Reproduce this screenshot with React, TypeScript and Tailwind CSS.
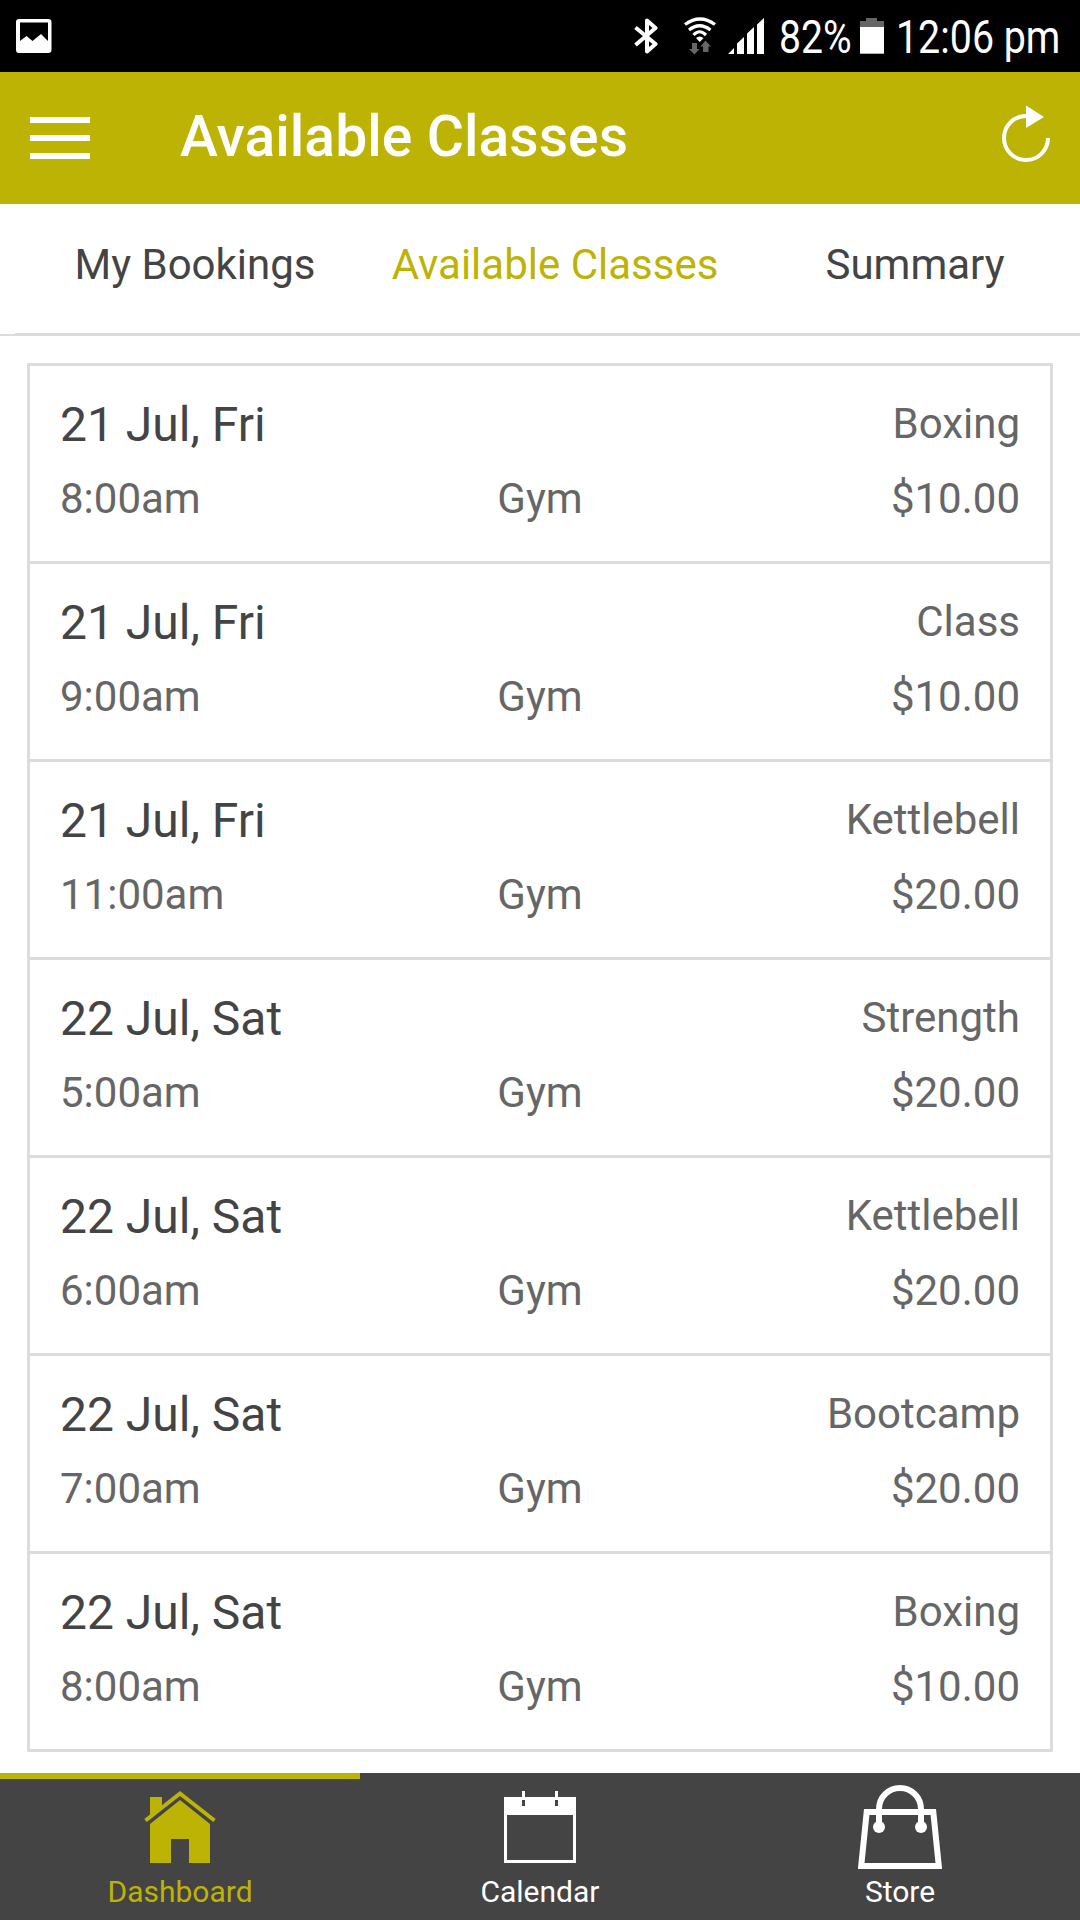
const classes = [
  { date: "21 Jul, Fri", time: "8:00am", name: "Boxing", price: "$10.00" },
  { date: "21 Jul, Fri", time: "9:00am", name: "Class", price: "$10.00" },
  { date: "21 Jul, Fri", time: "11:00am", name: "Kettlebell", price: "$20.00" },
  { date: "22 Jul, Sat", time: "5:00am", name: "Strength", price: "$20.00" },
  { date: "22 Jul, Sat", time: "6:00am", name: "Kettlebell", price: "$20.00" },
  { date: "22 Jul, Sat", time: "7:00am", name: "Bootcamp", price: "$20.00" },
  { date: "22 Jul, Sat", time: "8:00am", name: "Boxing", price: "$10.00" },
];

function StatusBar() {
  return (
    <div className="flex h-[72px] items-start overflow-hidden bg-black pt-[17px] pl-4 text-white">
      <svg className="mt-[2px] h-[34px] w-9 shrink-0" viewBox="0 0 36 34" fill="#fff">
        <path
          fillRule="evenodd"
          d="M3 0H32Q35.500 0 35.500 3V31Q35.500 34 32 34H3Q0 34 0 31V3Q0 0 3 0ZM4 3.500V22L10.500 17L16.500 22L25 15L32 22V3.500Z"
        />
      </svg>
      <svg className="ml-[582px] h-[38px] w-6 shrink-0" viewBox="0 0 24 38" fill="none" stroke="#fff" strokeWidth="4">
        <path d="M1.500 10.500L21.500 27L13 34.500V3.500L21.500 11L1.500 28" strokeLinejoin="round" />
      </svg>
      <svg className="ml-[26px] h-[38px] w-8 shrink-0" viewBox="0 0 32 38" fill="none">
        <g stroke="#fff" strokeWidth="3.200">
          <path d="M1 7.500Q16 -3.500 31 7.500" />
          <path d="M5 13Q15.500 4.500 26.500 13" />
          <path d="M9.500 18Q15.500 11.500 22 18" />
        </g>
        <path d="M12 21Q15.500 18 19.500 21L15.750 25Z" fill="#fff" />
        <path d="M8 26H13V32H15.500L10.500 37.500L5 32H8ZM19 35V29.500H16.500L21.500 23.500L27 29.500H24.500V35Z" fill="#666" />
      </svg>
      <svg className="mt-px ml-3 h-9 w-9 shrink-0" viewBox="0 0 36 36" fill="#fff">
        <path d="M0 36L6 30V36ZM9 36V25.500L16 19V36ZM19 36V15.500L26 9V36ZM29 36V6.500L36 0V36Z" />
      </svg>
      <div className="-mt-[17px] ml-[15px] w-[81px] shrink-0 leading-[75px]">
        <span className="inline-block origin-left scale-x-[0.86] text-[45.500px] whitespace-nowrap">82%</span>
      </div>
      <svg className="mt-px h-9 w-6 shrink-0" viewBox="0 0 24 36">
        <path d="M0 3H6V0H17V3H24V36H0Z" fill="#666" />
        <path d="M0 9H24V35.500H0Z" fill="#fff" />
      </svg>
      <div className="-mt-[17px] ml-3 shrink-0 leading-[75px]">
        <span className="inline-block origin-left scale-x-[0.865] text-[45.500px] whitespace-nowrap">12:06 pm</span>
      </div>
    </div>
  );
}

function Header() {
  return (
    <header className="flex h-[132px] items-start bg-[#bdb304] text-white">
      <button aria-label="Menu" className="mt-[45px] ml-[30px] flex w-[60px] flex-col gap-3">
        <span className="h-[6px] bg-white" />
        <span className="h-[6px] bg-white" />
        <span className="h-[6px] bg-white" />
      </button>
      <h1 className="ml-[90px] flex-1 text-[57px] leading-[129px] font-medium tracking-[0.06px] whitespace-nowrap">Available Classes</h1>
      <svg className="mt-[33px] mr-[30px] h-[58px] w-12" viewBox="0 0 48 58" fill="none">
        <path d="M24 11A22 22 0 1 0 46 33" stroke="#fff" strokeWidth="4" />
        <path d="M24 0.500L42 12L24 23Z" fill="#fff" />
      </svg>
    </header>
  );
}

function Tabs() {
  return (
    <nav className="flex h-[132px] items-end overflow-hidden">
      <div className="h-[2px] w-[15px] shrink-0 bg-[#dcdcdc]" />
      <div className="flex h-full shrink-0 border-b-[3px] border-[#dcdcdc] text-center text-[42px] leading-[121px] text-[#444]">
        <span className="w-[360px]">My Bookings</span>
        <span className="w-[360px] text-[#bdb304]">Available Classes</span>
        <span className="w-[360px]">Summary</span>
      </div>
    </nav>
  );
}

function HomeIcon() {
  return (
    <svg className="h-[84px] w-[84px]" viewBox="0 0 84 84" fill="#bdb304">
      <path d="M12 12H24V22L12 32Z" />
      <path d="M7.500 35.500L42 8.500L76.500 35.500" fill="none" stroke="#bdb304" strokeWidth="4" />
      <path d="M42 15L72 39V78H51V54H33V78H12V39Z" />
    </svg>
  );
}

function CalendarIcon() {
  return (
    <svg className="h-[84px] w-[84px]" viewBox="0 0 84 84" fill="#fff">
      <path d="M24 6H27V12H24ZM57 6H60V12H57Z" />
      <path fillRule="evenodd" d="M6 12H78V78H6ZM9 30V75H75V30ZM24 15V21H27V15ZM57 15V21H60V15Z" />
    </svg>
  );
}

function StoreIcon() {
  return (
    <svg className="h-[84px] w-[84px]" viewBox="0 0 84 84" fill="none" stroke="#fff" strokeWidth="6">
      <path d="M8.700 27H75.300L80.800 81H3.200Z" />
      <path d="M21 42V24A21 21 0 0 1 63 24V42" />
      <circle cx="21" cy="42" r="6" fill="#fff" stroke="none" />
      <circle cx="63" cy="42" r="6" fill="#fff" stroke="none" />
    </svg>
  );
}

function BottomNav() {
  return (
    <nav className="mt-[21px] grid h-[147px] grid-cols-3 bg-[#444] text-[30px] leading-[36px] text-white">
      <div className="flex flex-col items-center border-t-[6px] border-[#bdb304] pt-[6px] text-[#bdb304]">
        <HomeIcon />
        <span className="mt-[5px]">Dashboard</span>
      </div>
      <div className="flex flex-col items-center pt-3">
        <CalendarIcon />
        <span className="mt-[5px]">Calendar</span>
      </div>
      <div className="flex flex-col items-center pt-3">
        <StoreIcon />
        <span className="mt-[5px]">Store</span>
      </div>
    </nav>
  );
}

export default function App() {
  return (
    <div className="h-[1920px] w-[1080px] overflow-hidden bg-white font-['Roboto',sans-serif]">
      <StatusBar />
      <Header />
      <Tabs />
      <main className="mx-[27px] mt-[27px] divide-y-[3px] divide-[#dcdcdc] border-[3px] border-[#dcdcdc] text-[42px] text-[#666]">
        {classes.map((c, i) => (
          <div key={i} className="box-content h-[195px]">
            <div className="flex h-[87px] justify-between px-[30px] pt-[30px]">
              <span className="text-[48px] leading-[57px] text-[#444]">{c.date}</span>
              <span className="leading-[55px]">{c.name}</span>
            </div>
            <div className="mt-[17px] grid grid-cols-3 px-[30px] leading-[57px]">
              <span>{c.time}</span>
              <span className="text-center">Gym</span>
              <span className="text-right">{c.price}</span>
            </div>
          </div>
        ))}
      </main>
      <BottomNav />
    </div>
  );
}
